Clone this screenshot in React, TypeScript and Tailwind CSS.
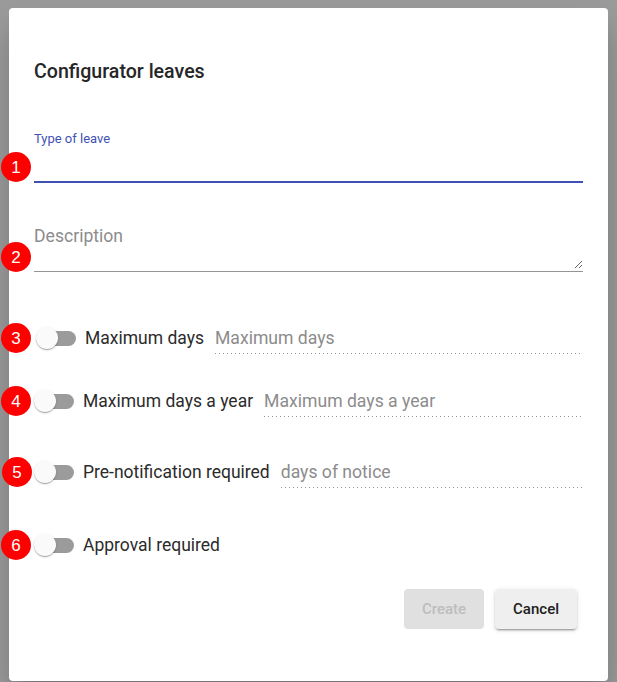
import React from 'react'

// Numbered red marker laid over the form (annotation badge)
function Badge({ n, className }: { n: number; className: string }) {
  return (
    <div
      className={`absolute w-[30px] h-[30px] rounded-full bg-[#ff0000] text-white flex items-center justify-center text-[17px] leading-none font-['Liberation_Sans',Arial,sans-serif] ${className}`}
    >
      {n}
    </div>
  )
}

function Toggle() {
  return (
    <div className="relative w-[40px] h-[24px] flex items-center shrink-0">
      <div className="w-[40px] h-[15px] rounded-full bg-[#9b9b9b]" />
      <div className="absolute left-0 top-[1px] w-[22px] h-[22px] rounded-full bg-[#fafafa] shadow-[0_2px_1px_-1px_rgba(0,0,0,0.2),0_1px_1px_0_rgba(0,0,0,0.14),0_1px_3px_0_rgba(0,0,0,0.12)]" />
    </div>
  )
}

function DottedField({ placeholder }: { placeholder: string }) {
  return (
    <div className="flex-1 ml-[11px]">
      <input
        disabled
        placeholder={placeholder}
        className="block w-full h-[24px] leading-[24px] text-[17.6px] p-0 bg-transparent outline-none placeholder:text-[#8c8c8c]"
      />
      <div className="h-px mt-[3px] bg-[linear-gradient(to_right,rgba(0,0,0,0.42)_0%,rgba(0,0,0,0.42)_33%,transparent_0%)] bg-[length:4px_1px] bg-repeat-x" />
    </div>
  )
}

export default function App() {
  return (
    <div className="w-[617px] h-[682px] overflow-hidden bg-[#9b9b9b] pt-[8px] px-[9px] font-[Roboto,sans-serif] text-[#2b2b2b]">
      <div className="h-[673px] bg-white rounded-[4px] pt-[48px] px-[25px] shadow-[0_11px_15px_-7px_rgba(0,0,0,0.2),0_24px_38px_3px_rgba(0,0,0,0.14)]">
        <h1 className="text-[19.6px] leading-[32px] font-medium text-[#262626]">Configurator leaves</h1>

        {/* Type of leave */}
        <div className="relative mt-[43px]">
          <div className="text-[13px] leading-[16px] text-[#3f51b5]">Type of leave</div>
          <input className="block w-full h-[34px] text-[18px] p-0 bg-transparent outline-none" />
          <div className="h-[2px] bg-[#3f51b5]" />
          <Badge n={1} className="left-[-33px] top-[21px]" />
        </div>

        {/* Description */}
        <div className="relative mt-[42px]">
          <textarea
            placeholder="Description"
            className="block w-full h-[44px] text-[17.6px] leading-[22px] p-0 bg-transparent outline-none resize-y placeholder:text-[#8c8c8c]"
          />
          <div className="h-px mt-[2px] bg-[#949494]" />
          <Badge n={2} className="left-[-33px] top-[17px]" />
        </div>

        {/* Maximum days */}
        <div className="relative flex items-start mt-[54px] pl-[2px]">
          <Toggle />
          <span className="ml-[9px] text-[17.5px] leading-[24px] whitespace-nowrap">Maximum days</span>
          <DottedField placeholder="Maximum days" />
          <Badge n={3} className="left-[-33px] top-[-3px]" />
        </div>

        {/* Maximum days a year */}
        <div className="relative flex items-start mt-[35px]">
          <Toggle />
          <span className="ml-[9px] text-[17.5px] leading-[24px] whitespace-nowrap">Maximum days a year</span>
          <DottedField placeholder="Maximum days a year" />
          <Badge n={4} className="left-[-33px] top-[-3px]" />
        </div>

        {/* Pre-notification */}
        <div className="relative flex items-start mt-[43px]">
          <Toggle />
          <span className="ml-[9px] text-[17.5px] leading-[24px] whitespace-nowrap">Pre-notification required</span>
          <DottedField placeholder="days of notice" />
          <Badge n={5} className="left-[-32px] top-[-3px]" />
        </div>

        {/* Approval */}
        <div className="relative flex items-start mt-[45px]">
          <Toggle />
          <span className="ml-[9px] text-[17.5px] leading-[24px] whitespace-nowrap">Approval required</span>
          <Badge n={6} className="left-[-33px] top-[-3px]" />
        </div>

        <div className="flex justify-end gap-[11px] mt-[32px] mr-[6px]">
          <button
            disabled
            className="h-[40px] px-[18px] rounded-[4px] bg-[#e0e0e0] text-[15px] font-medium text-[#bdbdbd]"
          >
            Create
          </button>
          <button className="h-[40px] px-[18px] rounded-[4px] bg-[#efefef] text-[15px] font-medium text-[#212121] shadow-[0_3px_1px_-2px_rgba(0,0,0,0.2),0_2px_2px_0_rgba(0,0,0,0.14),0_1px_5px_0_rgba(0,0,0,0.12)]">
            Cancel
          </button>
        </div>
      </div>
    </div>
  )
}
